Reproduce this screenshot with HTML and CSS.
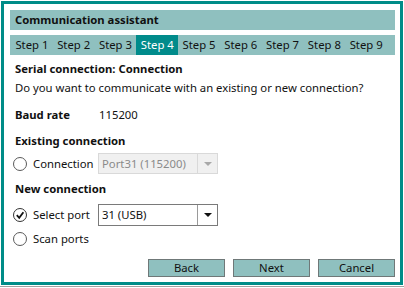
FILE: index.html
```html
<!DOCTYPE html>
<html lang="en">
<head>
  <meta charset="UTF-8">
  <title>Communication assistant</title>
  <link rel="stylesheet" href="styles.css">
</head>
<body>
  <div class="assistant">
    <div class="assistant-title">Communication assistant</div>
    <div class="steps">
      <span class="step">Step 1</span>
      <span class="step">Step 2</span>
      <span class="step">Step 3</span>
      <span class="step active">Step 4</span>
      <span class="step">Step 5</span>
      <span class="step">Step 6</span>
      <span class="step">Step 7</span>
      <span class="step">Step 8</span>
      <span class="step">Step 9</span>
    </div>
    <div class="content">
      <div class="section-title">Serial connection: Connection</div>
      <div class="question">Do you want to communicate with an existing or new connection?</div>
      <div class="baud">
        <span class="baud-label">Baud rate</span>
        <span>115200</span>
      </div>
      <div class="group-title existing">Existing connection</div>
      <div class="option-row first">
        <span class="radio"><svg width="14" height="14" viewBox="0 0 14 14"><circle cx="7" cy="7" r="6.5" fill="#fff" stroke="#5a5a5a"/></svg>Connection</span>
        <div class="combo disabled">
          <span class="combo-text">Port31 (115200)</span>
          <span class="combo-arrow"><svg width="8" height="4" viewBox="0 0 8 4"><path d="M0 0h8L4 4z" fill="#a8a8a8"/></svg></span>
        </div>
      </div>
      <div class="group-title">New connection</div>
      <div class="option-row select">
        <span class="radio"><svg width="14" height="14" viewBox="0 0 14 14"><circle cx="7" cy="7" r="6.5" fill="#fff" stroke="#333"/><path d="M3.8 7.2l2.4 2.6 4.2-5.6" fill="none" stroke="#111" stroke-width="1.8"/></svg>Select port</span>
        <div class="combo">
          <span class="combo-text">31 (USB)</span>
          <span class="combo-arrow"><svg width="8" height="4" viewBox="0 0 8 4"><path d="M0 0h8L4 4z" fill="#111"/></svg></span>
        </div>
      </div>
      <div class="option-row scan">
        <span class="radio"><svg width="14" height="14" viewBox="0 0 14 14"><circle cx="7" cy="7" r="6.5" fill="#fff" stroke="#5a5a5a"/></svg>Scan ports</span>
      </div>
      <div class="buttons">
        <button class="btn">Back</button>
        <button class="btn">Next</button>
        <button class="btn">Cancel</button>
      </div>
    </div>
  </div>
  <div class="window-edge"></div>
</body>
</html>
```

FILE: styles.css
```css
html, body {
  margin: 0;
  padding: 0;
  background: #fff;
  color: #111;
  font-family: 'Noto Sans', 'Open Sans', sans-serif;
  font-size: 11.3px;
  line-height: 16px;
}
.assistant {
  box-sizing: border-box;
  margin: 1px 1px 0 1px;
  width: 402px;
  height: 284px;
  border: 3px solid #008c88;
  padding: 6px 5px 5px 6px;
  display: flex;
  flex-direction: column;
}
.assistant-title {
  height: 20px;
  line-height: 20px;
  background: #8fc0bf;
  padding-left: 5px;
  font-weight: 700;
}
.steps {
  margin-top: 5px;
  height: 20px;
  background: #8fc0bf;
  display: flex;
  padding-left: 1px;
  white-space: nowrap;
}
.step {
  line-height: 20px;
  padding: 0 4.4px;
  white-space: nowrap;
}
.step.active {
  background: #008b8b;
  color: #fff;
}
.content {
  flex: 1;
  display: flex;
  flex-direction: column;
  padding-left: 5px;
}
.section-title {
  margin-top: 6px;
  font-weight: 700;
}
.question {
  margin-top: 3px;
}
.baud {
  margin-top: 11px;
  display: flex;
}
.baud-label {
  width: 84px;
  font-weight: 700;
}
.group-title {
  margin-top: 7px;
  font-weight: 700;
}
.group-title.existing {
  margin-top: 10px;
}
.option-row {
  display: flex;
  align-items: center;
  margin-left: -2px;
}
.option-row.first {
  margin-top: 4px;
}
.option-row.select {
  margin-top: 7px;
}
.option-row.scan {
  margin-top: 5px;
}
.radio {
  width: 85px;
  display: flex;
  align-items: center;
  gap: 6px;
}
.combo {
  box-sizing: border-box;
  width: 120px;
  height: 22px;
  border: 1px solid #7a7a7a;
  background: #fff;
  display: flex;
  align-items: center;
}
.combo-text {
  flex: 1;
  padding-left: 3px;
}
.combo-arrow {
  width: 19px;
  height: 100%;
  border-left: 1px solid #9a9a9a;
  display: flex;
  align-items: center;
  justify-content: center;
}
.combo.disabled {
  height: 21px;
  border-color: #d9d9d9;
  background: #f0f0f0;
  color: #8a8a8a;
}
.combo.disabled .combo-arrow {
  border-left-color: #d9d9d9;
}
.buttons {
  margin-top: auto;
  display: flex;
  justify-content: flex-end;
  gap: 8px;
}
.btn {
  box-sizing: border-box;
  width: 77px;
  height: 18px;
  padding: 0;
  border: 1px solid #6f7878;
  background: #8fc0bf;
  font-family: inherit;
  font-size: 11.3px;
  line-height: 16px;
  color: #111;
}
.window-edge {
  margin-top: 1px;
  height: 1px;
  background: #a0a0a0;
}
```
